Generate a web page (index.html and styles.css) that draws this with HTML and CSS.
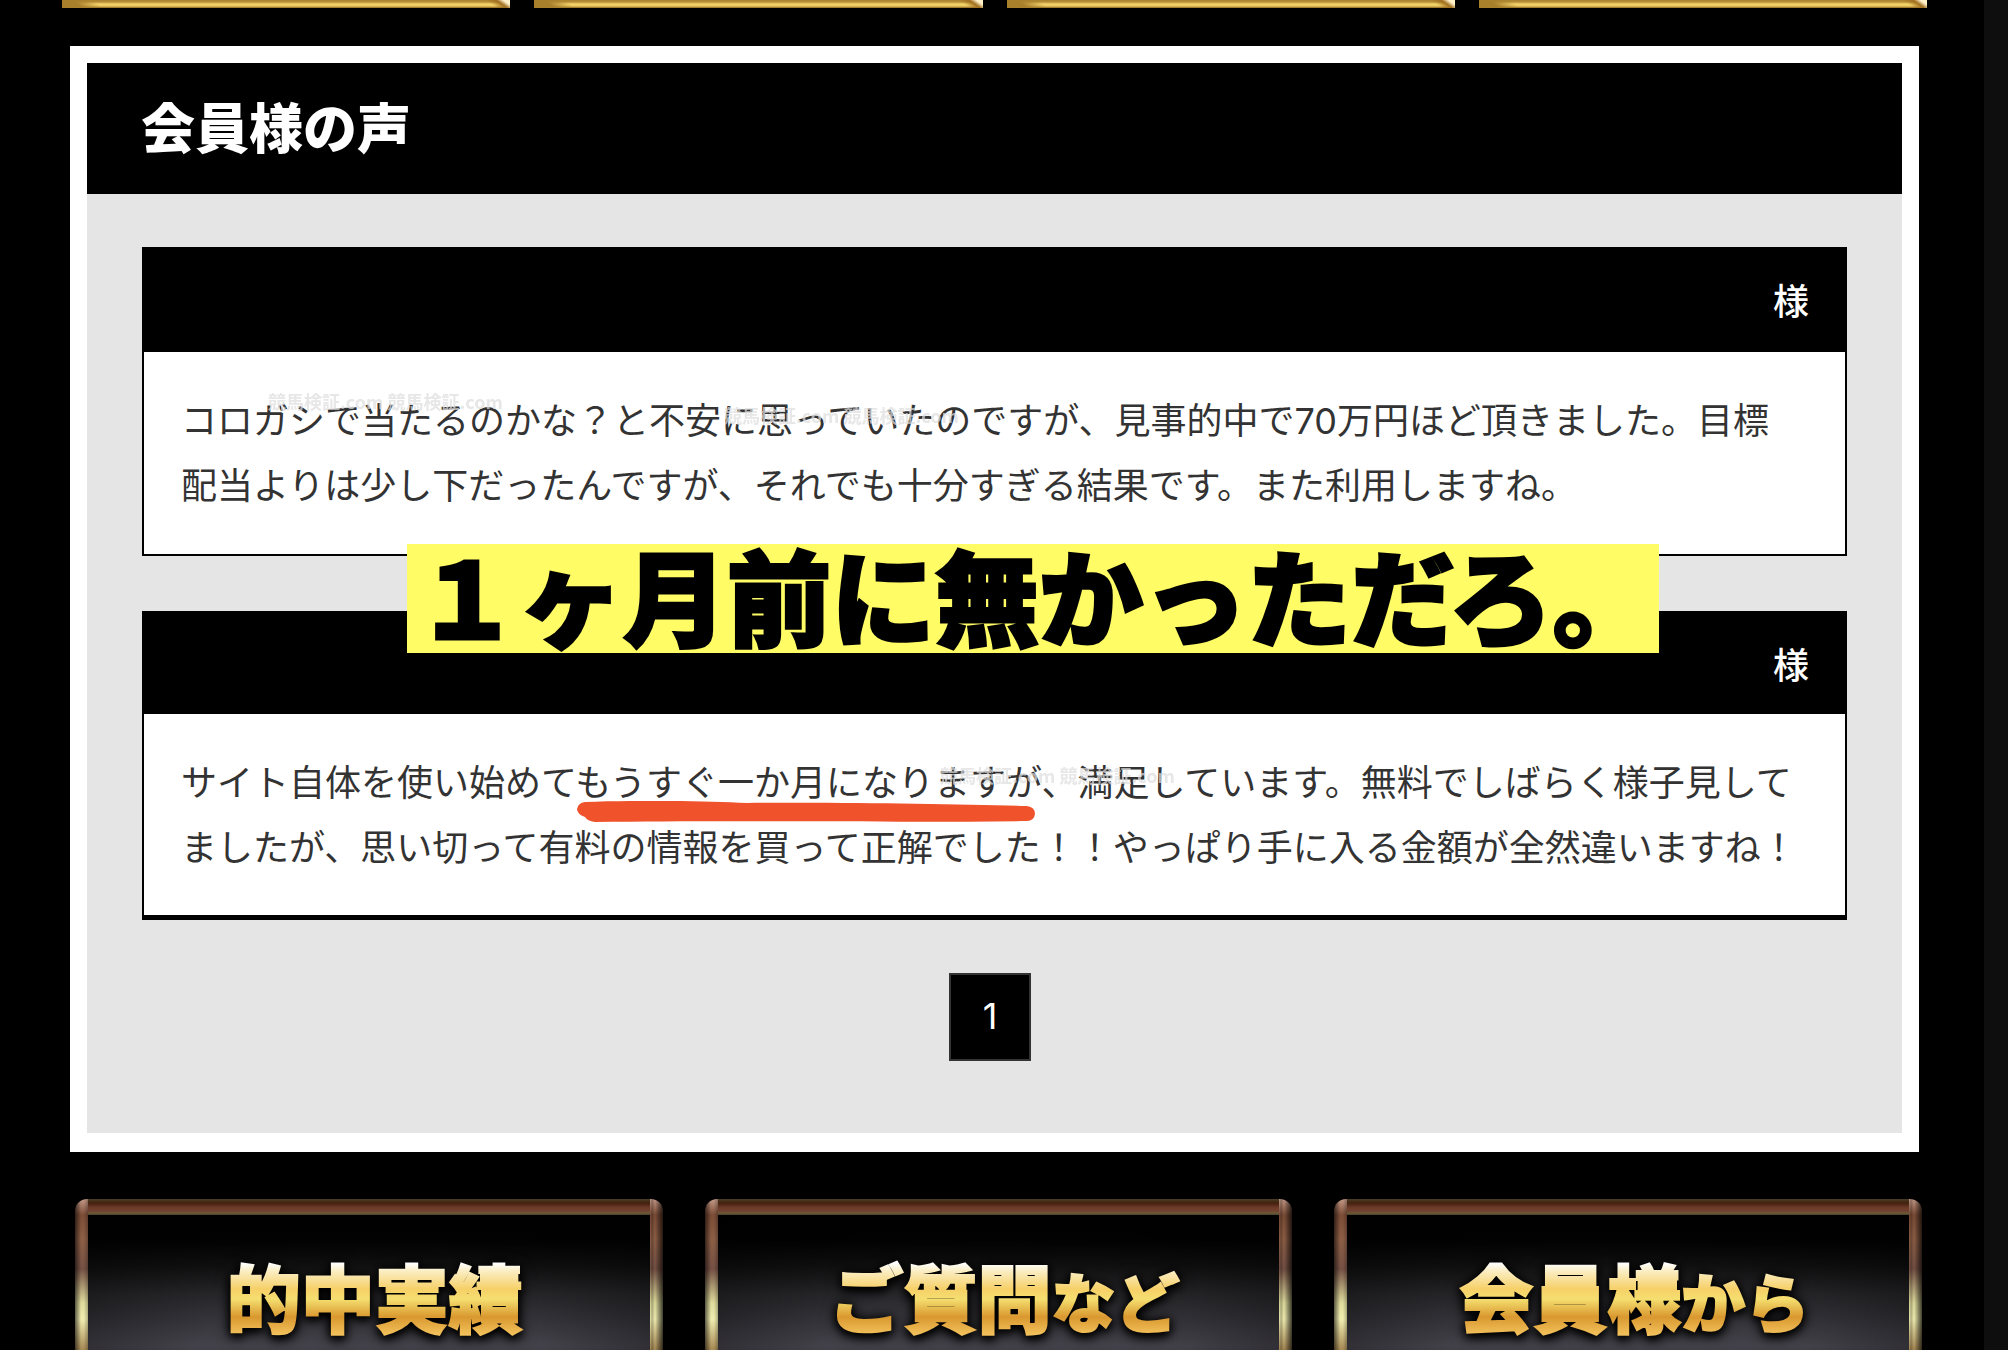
FILE: index.html
```html
<!DOCTYPE html>
<html lang="ja">
<head>
<meta charset="utf-8">
<title>会員様の声</title>
<link rel="stylesheet" href="styles.css">
</head>
<body>
<div class="page">
  <div class="gold-row">
    <div class="gold-bar"></div>
    <div class="gold-bar"></div>
    <div class="gold-bar"></div>
    <div class="gold-bar"></div>
  </div>

  <main class="panel">
    <h1 class="panel-title">会員様の声</h1>
    <div class="panel-body">
      <article class="voice">
        <h2 class="voice-name">様</h2>
        <p class="voice-text">コロガシで当たるのかな？と不安に思っていたのですが、見事的中で<span class="num">70</span>万円ほど頂きました。目標<br>配当よりは少し下だったんですが、それでも十分すぎる結果です。また利用しますね。</p>
        <span class="mark mark-a">競馬検証.com 競馬検証.com</span>
        <span class="mark mark-b">競馬検証.com 競馬検証.com</span>
        <strong class="caption">１ヶ月前に無かっただろ。</strong>
      </article>
      <article class="voice voice-last">
        <h2 class="voice-name">様</h2>
        <p class="voice-text">サイト自体を使い始めてもうすぐ一か月になりますが、満足しています。無料でしばらく様子見して<br>ましたが、思い切って有料の情報を買って正解でした！！やっぱり手に入る金額が全然違いますね！</p>
        <span class="mark mark-c">競馬検証.com 競馬検証.com</span>
        <svg class="stroke" viewBox="0 0 458 22" aria-hidden="true"><path d="M8 1 C60 -1 130 0 170 2 C260 1 380 3 450 5 Q458 6 458 13 Q457 20 450 20 C320 22 190 19 18 21 Q10 20 8 16 Q0 13 0 8 Q1 2 8 1Z" fill="#f0522c"/></svg>
      </article>
      <nav class="pager"><a class="pager-link" href="#">1</a></nav>
    </div>
  </main>

  <nav class="plates">
    <a class="plate" href="#"><span class="plate-face"><span class="plate-label">的中実績</span></span></a>
    <a class="plate" href="#"><span class="plate-face"><span class="plate-label">ご質問<small>など</small></span></span></a>
    <a class="plate" href="#"><span class="plate-face"><span class="plate-label">会員様<small>から</small></span></span></a>
  </nav>
</div>
</body>
</html>
```
FILE: styles.css
```css
* {
  box-sizing: border-box;
}

body {
  margin: 0;
  height: 100vh;
  overflow: hidden;
  background: #0e0e0e;
  font-family: "Noto Sans CJK JP", sans-serif;
}

.page {
  min-height: 100%;
  margin-right: 24px;
  background: #000;
}

.num {
  font-family: Inter, "Noto Sans CJK JP", sans-serif;
  line-height: 1;
}

/* lower edge of the gold buttons */
.gold-row {
  display: grid;
  grid-template-columns: repeat(4, 1fr);
  gap: 24px;
  padding: 0 57px 0 62px;
}

.gold-bar {
  height: 8px;
  background:
    linear-gradient(35deg, #a8802c 12px, transparent 24px) left / 40px 100% no-repeat,
    linear-gradient(215deg, #fff0c8 4px, #a07020 8px, transparent 14px) right / 30px 100% no-repeat,
    linear-gradient(#a8822f 0, #b98e37 2px, #f3d56c 4px, #edc95f 6px, #8a6420 8px);
}

.panel {
  margin: 38px 65px 0 70px;
  padding: 17px 17px 19px;
  background: #fff;
}

.panel-title {
  margin: 0;
  padding: 0 54px 6px;
  background: #000;
  color: #fff;
  font-size: 54px;
  font-weight: 900;
  line-height: 125px;
}

.panel-body {
  padding: 53px 55px 72px;
  background: #e5e5e5;
}

.voice {
  position: relative;
  margin-bottom: 55px;
  border: 2px solid #000;
  background: #fff;
}

.voice-last {
  margin-bottom: 53px;
  border-bottom-width: 5px;
}

.voice-name {
  margin: 0;
  padding: 0 36px 2px;
  background: #000;
  color: #fff;
  font-size: 36px;
  font-weight: 500;
  line-height: 101px;
  text-align: right;
}

.voice-last .voice-name {
  padding-bottom: 0;
}

.voice-text {
  margin: 0;
  padding: 34px 0 38px 37px;
  color: #333;
  font-size: 36px;
  line-height: 65px;
  white-space: nowrap;
}

.voice-last .voice-text {
  padding-bottom: 37px;
}

.caption {
  position: absolute;
  z-index: 1;
  left: 263px;
  top: 295px;
  padding: 0 1px 10px 4px;
  background: #fffc66;
  color: #000;
  font-size: 104px;
  font-weight: 900;
  line-height: 99px;
  padding: 0 2px 10px 8px;
  white-space: nowrap;
  -webkit-text-stroke: 3px #000;
}

.mark {
  position: absolute;
  color: #ddd;
  opacity: 0.7;
  font-size: 18px;
  font-weight: 700;
  line-height: 24px;
  white-space: nowrap;
}

.mark-a {
  left: 124px;
  top: 140px;
}

.mark-b {
  left: 580px;
  top: 154px;
}

.mark-c {
  left: 796px;
  top: 150px;
}

.stroke {
  position: absolute;
  left: 433px;
  top: 188px;
  width: 458px;
  height: 22px;
}

.pager {
  display: flex;
  justify-content: center;
  padding-right: 9px;
}

.pager-link {
  width: 82px;
  padding-bottom: 2px;
  border: 2px solid #333;
  background: #000;
  color: #fff;
  font-family: Inter, sans-serif;
  font-size: 36px;
  line-height: 82px;
  text-align: center;
  text-decoration: none;
}

.plates {
  display: grid;
  grid-template-columns: repeat(3, 1fr);
  gap: 42px;
  padding: 47px 62px 0 75px;
}

/* metal frame around a dark face */
.plate {
  height: 232px;
  padding: 16px 13px;
  border-radius: 12px;
  background:
    linear-gradient(#4a4026 0, #43200f 4px, #703c2a 9px, #70402e 12px, #6c5b38 14px, #4a4028 16px) 13px 0 / calc(100% - 26px) 16px no-repeat,
    linear-gradient(90deg, #0009 0, transparent 6px, transparent 9px, #0004 13px, transparent 14px, transparent calc(100% - 13px), #0004 calc(100% - 11px), transparent calc(100% - 8px), #000b 100%),
    linear-gradient(#c49a88 0, #7b4c36 16px, #8c5e45 40px, #745044 70px, #dedb9c 104px, #f0edb0 120px, #a78a56 150px, #5a3020 100%);
  text-decoration: none;
}

.plate-face {
  display: block;
  height: 200px;
  background:
    radial-gradient(ellipse at 50% 100%, #0000 50%, #0008 100%),
    linear-gradient(#000 0, #020202 25px, #111 50px, #2a2a2e 80px, #434149 130px, #222 200px);
  text-align: center;
}

.plate-label {
  display: block;
  padding-left: 12px;
  background: linear-gradient(#fff 48px, #fbeec4 56px, #f6d068 74px, #f5df70 84px, #d9982f 102px, #f3c25c 120px);
  background-clip: text;
  color: transparent;
  -webkit-text-stroke: 2px transparent;
  filter: drop-shadow(0 3px 4px #000) drop-shadow(0 0 6px #000);
  font-size: 74px;
  font-weight: 900;
  line-height: 160px;
}

.plate-label small {
  font-size: 64px;
}
```
